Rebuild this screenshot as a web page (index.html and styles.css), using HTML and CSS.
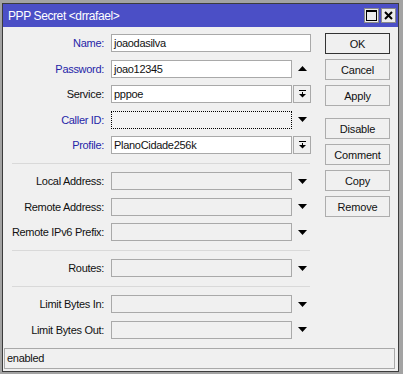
FILE: index.html
```html
<!DOCTYPE html>
<html lang="en">
<head>
  <meta charset="UTF-8">
  <title>PPP Secret</title>
  <link rel="stylesheet" href="styles.css">
</head>
<body>
  <div class="window">
    <div class="titlebar">
      <div class="title">PPP Secret &lt;drrafael&gt;</div>
      <div class="title-btns">
        <span class="tbtn">
          <svg width="11" height="11" viewBox="0 0 11 11"><rect x="0.5" y="0.5" width="10" height="10" fill="none" stroke="#000"/><rect x="0" y="0" width="11" height="2" fill="#000"/></svg>
        </span>
        <span class="tbtn">
          <svg width="9" height="9" viewBox="0 0 9 9"><path d="M1 1 L8 8 M8 1 L1 8" stroke="#000" stroke-width="2"/></svg>
        </span>
      </div>
    </div>
    <div class="body">
      <div class="form">
        <div class="row">
          <div class="lbl blue">Name:</div>
          <div class="field filled wide">joaodasilva</div>
        </div>
        <div class="row">
          <div class="lbl blue">Password:</div>
          <div class="field filled">joao12345</div>
          <span class="arrow"><svg width="9" height="5" viewBox="0 0 9 5"><path d="M0 5 L9 5 L4.5 0 Z" fill="#000"/></svg></span>
        </div>
        <div class="row">
          <div class="lbl">Service:</div>
          <div class="field filled">pppoe</div>
          <span class="dropbtn"><svg width="7" height="8" viewBox="0 0 7 8"><rect x="0" y="0" width="7" height="1" fill="#000"/><rect x="3" y="2" width="1" height="2" fill="#000"/><path d="M0 4 L7 4 L3.5 7.5 Z" fill="#000"/></svg></span>
        </div>
        <div class="row">
          <div class="lbl blue">Caller ID:</div>
          <div class="field focus"></div>
          <span class="arrow"><svg width="9" height="5" viewBox="0 0 9 5"><path d="M0 0 L9 0 L4.5 5 Z" fill="#000"/></svg></span>
        </div>
        <div class="row">
          <div class="lbl blue">Profile:</div>
          <div class="field filled">PlanoCidade256k</div>
          <span class="dropbtn"><svg width="7" height="8" viewBox="0 0 7 8"><rect x="0" y="0" width="7" height="1" fill="#000"/><rect x="3" y="2" width="1" height="2" fill="#000"/><path d="M0 4 L7 4 L3.5 7.5 Z" fill="#000"/></svg></span>
        </div>

        <div class="sep"></div>

        <div class="row">
          <div class="lbl">Local Address:</div>
          <div class="field"></div>
          <span class="arrow"><svg width="9" height="5" viewBox="0 0 9 5"><path d="M0 0 L9 0 L4.5 5 Z" fill="#000"/></svg></span>
        </div>
        <div class="row">
          <div class="lbl">Remote Address:</div>
          <div class="field"></div>
          <span class="arrow"><svg width="9" height="5" viewBox="0 0 9 5"><path d="M0 0 L9 0 L4.5 5 Z" fill="#000"/></svg></span>
        </div>
        <div class="row">
          <div class="lbl">Remote IPv6 Prefix:</div>
          <div class="field"></div>
          <span class="arrow"><svg width="9" height="5" viewBox="0 0 9 5"><path d="M0 0 L9 0 L4.5 5 Z" fill="#000"/></svg></span>
        </div>

        <div class="sep"></div>

        <div class="row">
          <div class="lbl">Routes:</div>
          <div class="field"></div>
          <span class="arrow"><svg width="9" height="5" viewBox="0 0 9 5"><path d="M0 0 L9 0 L4.5 5 Z" fill="#000"/></svg></span>
        </div>

        <div class="sep"></div>

        <div class="row">
          <div class="lbl">Limit Bytes In:</div>
          <div class="field"></div>
          <span class="arrow"><svg width="9" height="5" viewBox="0 0 9 5"><path d="M0 0 L9 0 L4.5 5 Z" fill="#000"/></svg></span>
        </div>
        <div class="row">
          <div class="lbl">Limit Bytes Out:</div>
          <div class="field"></div>
          <span class="arrow"><svg width="9" height="5" viewBox="0 0 9 5"><path d="M0 0 L9 0 L4.5 5 Z" fill="#000"/></svg></span>
        </div>
      </div>

      <div class="buttons">
        <button class="btn default">OK</button>
        <button class="btn">Cancel</button>
        <button class="btn">Apply</button>
        <button class="btn spaced">Disable</button>
        <button class="btn">Comment</button>
        <button class="btn">Copy</button>
        <button class="btn">Remove</button>
      </div>
    </div>
    <div class="status">enabled</div>
  </div>
</body>
</html>
```

FILE: styles.css
```css
html, body {
  margin: 0; padding: 0;
  background: #a3a3a3;
  font-family: 'Liberation Sans', Arial, sans-serif;
  font-size: 11px;
  letter-spacing: -0.3px;
  color: #111;
}
.window {
  margin: 3px 0 0 2px;
  width: 397px; height: 369px;
  box-sizing: border-box;
  border: 1px solid #3c3c3c;
  background: #f0f0f0;
  display: flex;
  flex-direction: column;
}
.titlebar {
  height: 23px;
  background: #4b4fc6;
  display: flex;
  align-items: center;
  justify-content: space-between;
  padding: 0 2px 0 5px;
}
.title {
  color: #fff;
  font-size: 12px;
  letter-spacing: -0.4px;
}
.title-btns {
  display: flex;
  gap: 2px;
}
.tbtn {
  width: 15px; height: 15px;
  box-sizing: border-box;
  background: #ececec;
  border: 1px solid #8a8a8a;
  display: flex; align-items: center; justify-content: center;
}

.body {
  flex: 1;
  display: flex;
  padding-top: 6px;
}
.form {
  display: flex;
  flex-direction: column;
  gap: 7.5px;
  padding-top: 1px;
  width: 307px;
}
.row {
  display: grid;
  grid-template-columns: 107px 181px 18px;
  column-gap: 1px;
  height: 18px;
  align-items: center;
}
.lbl {
  text-align: right;
  padding-right: 6px;
  white-space: nowrap;
}
.lbl.blue { color: #2525a8; }
.field {
  height: 18px;
  box-sizing: border-box;
  border: 1px solid #a9a9a9;
  background: #f0f0f0;
  padding: 0 2px;
  line-height: 16px;
  white-space: nowrap;
  overflow: hidden;
}
.field.filled { background: #fff; }
.field.wide { grid-column: 2 / span 2; }
.field.focus {
  border: 1px dotted #000;
  background: #f3f3f3;
}
.arrow {
  display: flex; align-items: center; justify-content: center;
  height: 18px;
}
.dropbtn {
  height: 18px;
  box-sizing: border-box;
  border: 1px solid #a9a9a9;
  background: #f0f0f0;
  display: flex; align-items: center; justify-content: center;
}
.sep {
  height: 1px;
  background: #d9d9d9;
  margin: 1.5px 0 0.5px 9px;
  width: 298px;
}

.buttons {
  display: flex;
  flex-direction: column;
  gap: 5px;
  margin-left: 15px;
}
.btn {
  width: 65px; height: 21px;
  box-sizing: border-box;
  border: 1px solid #adadad;
  background: #f0f0f0;
  font-family: inherit;
  font-size: 11px;
  letter-spacing: -0.2px;
  color: #111;
  padding: 0;
}
.btn.default { border-color: #333; }
.btn.spaced { margin-top: 7px; }

.status {
  margin: 0 3px 2px 1px;
  height: 21px;
  box-sizing: border-box;
  border: 1px solid #a9a9a9;
  padding-left: 2px;
  line-height: 19px;
}
```
